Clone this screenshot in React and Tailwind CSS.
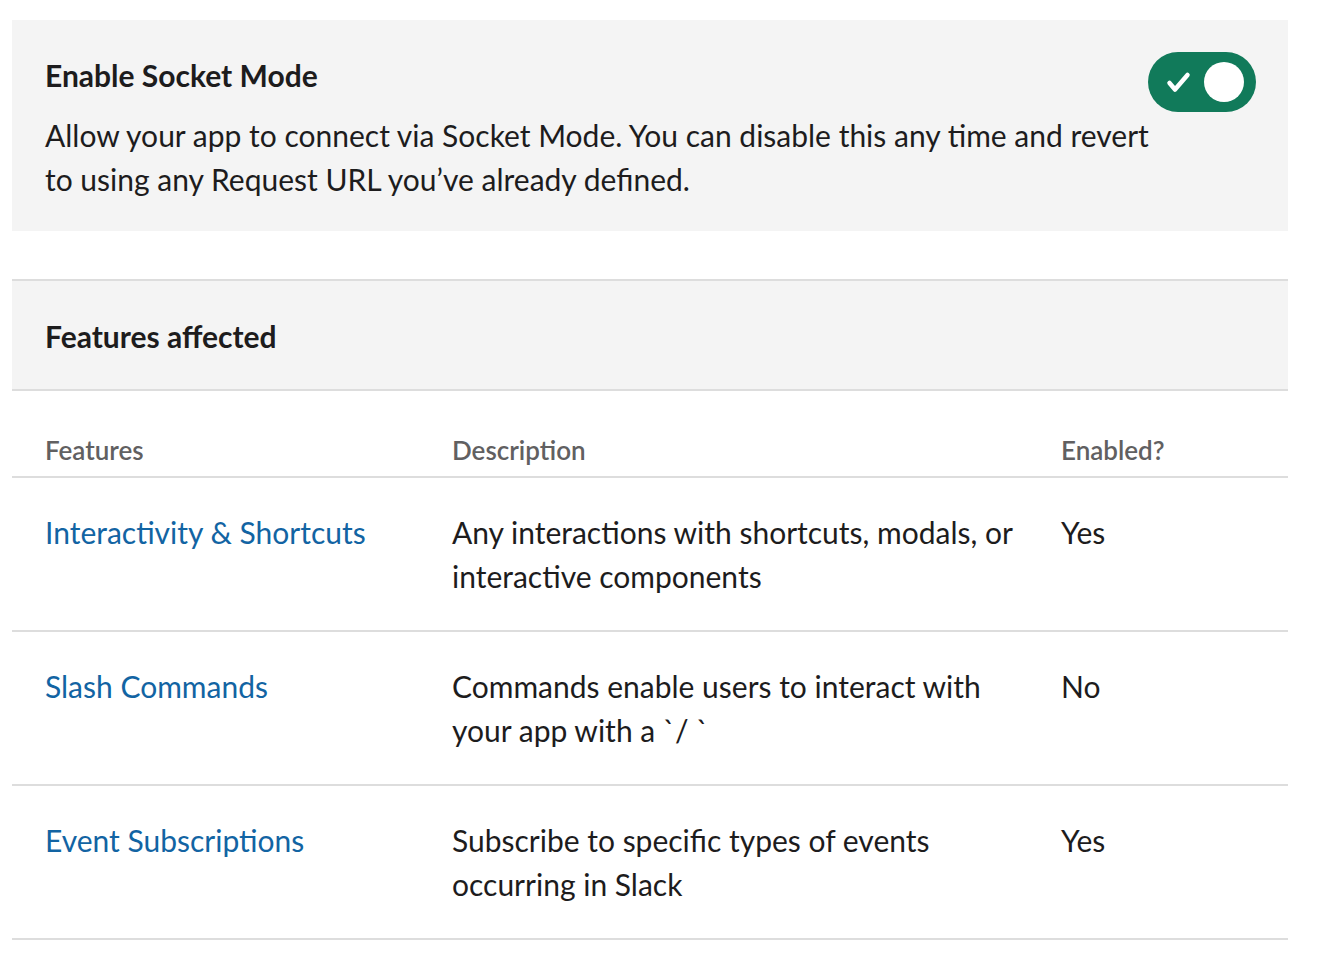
import React from "react";

const rows = [
  {
    name: "Interactivity & Shortcuts",
    desc: "Any interactions with shortcuts, modals, or interactive components",
    enabled: "Yes",
  },
  {
    name: "Slash Commands",
    desc: "Commands enable users to interact with your app with a `/ `",
    enabled: "No",
  },
  {
    name: "Event Subscriptions",
    desc: "Subscribe to specific types of events occurring in Slack",
    enabled: "Yes",
  },
];

export default function App() {
  return (
    <div
      className="min-h-screen bg-white pt-[20px] pl-[12px] pr-[34px] text-[#1d1c1d]"
      style={{ fontFamily: "Lato, 'Noto Sans', sans-serif" }}
    >
      <div className="flex items-start bg-[#f4f4f4] pl-[33px] pr-[32px] pt-[33px] pb-[30px]">
        <div className="-mr-[16px] flex-1">
          <div className="text-[30px] font-bold leading-[44px]">Enable Socket Mode</div>
          <p className="mt-[16px] text-[30px] leading-[44px]">
            Allow your app to connect via Socket Mode. You can disable this any time and revert to using any Request URL you’ve already defined.
          </p>
        </div>
        <div className="relative z-10 -mt-[1px] flex h-[60px] w-[108px] shrink-0 items-center justify-between rounded-full bg-[#117a5a] pl-[18px] pr-[12px]">
          <svg width="26" height="22" viewBox="0 0 26 22" fill="none">
            <path d="M3.5 12 L9 18.5 L21.5 4" stroke="white" strokeWidth="4.5" strokeLinecap="round" strokeLinejoin="round" />
          </svg>
          <div className="h-[40px] w-[40px] rounded-full bg-white" />
        </div>
      </div>

      <div className="mt-[48px] border-y-2 border-[#dddddd] bg-[#f4f4f4] pl-[33px] pt-[33px] pb-[31px]">
        <div className="text-[30px] font-bold leading-[44px]">Features affected</div>
      </div>

      <div className="grid grid-cols-[440px_609px_1fr] border-b-2 border-[#dddddd] pt-[37px] pb-[4px] text-[26px] font-semibold leading-[44px] text-[#616061]">
        <div className="pl-[33px]">Features</div>
        <div>Description</div>
        <div>Enabled?</div>
      </div>

      {rows.map((r) => (
        <div
          key={r.name}
          className="grid grid-cols-[440px_609px_1fr] border-b-2 border-[#dddddd] pt-[32px] pb-[32px] text-[30px] leading-[44px]"
        >
          <div className="pl-[33px] text-[#1264a3]">{r.name}</div>
          <div className="pr-[24px]">{r.desc}</div>
          <div>{r.enabled}</div>
        </div>
      ))}
    </div>
  );
}
